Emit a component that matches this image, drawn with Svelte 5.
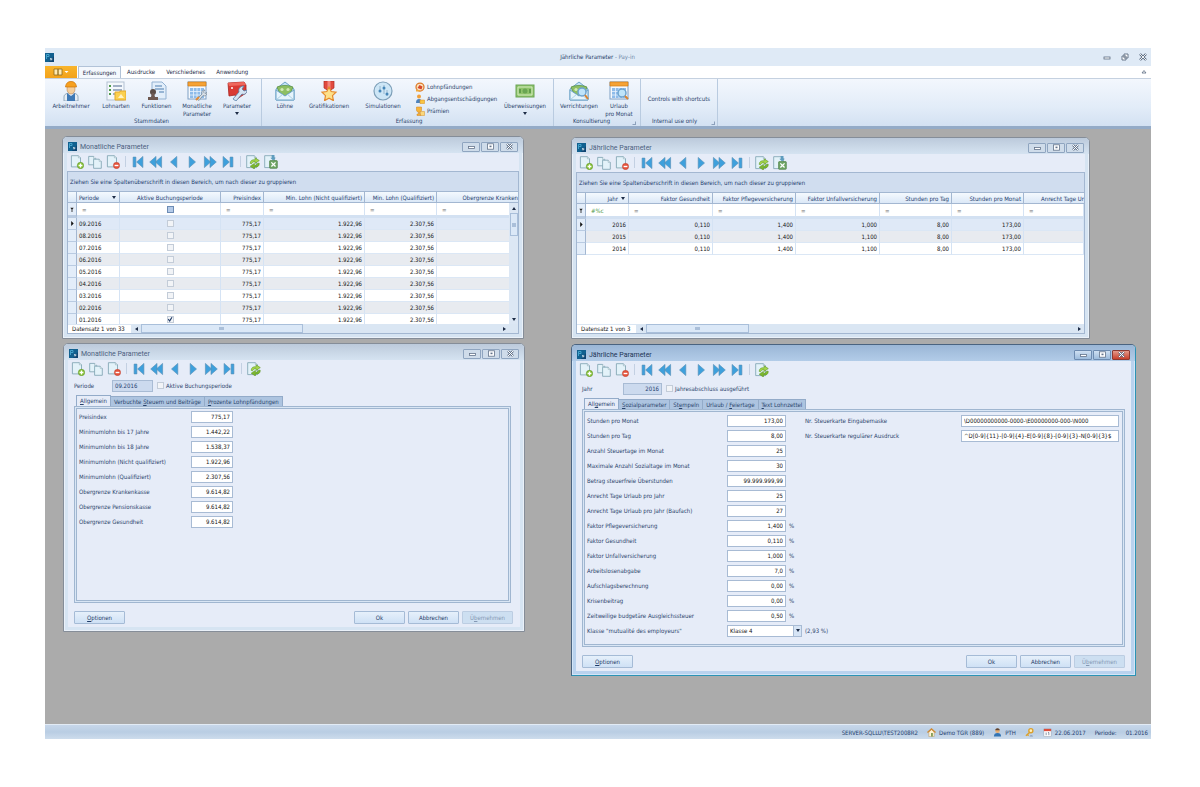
<script>
    const ribbonTabs = ['Ausdrucke', 'Verschiedenes', 'Anwendung'];

    const masterItems = [
        { icon: 'worker', label: 'Arbeitnehmer', width: 50 },
        { icon: 'wages', label: 'Lohnarten', width: 40 },
        { icon: 'stamp', label: 'Funktionen', width: 41 },
        { icon: 'calendar', label: 'Monatliche\nParameter', width: 40 },
        { icon: 'toolbox', label: 'Parameter', width: 40, menu: true },
    ];

    const entryItems = [
        { icon: 'envelope', label: 'Löhne', width: 34 },
        { icon: 'medal', label: 'Gratifikationen', width: 54 },
        { icon: 'simulation', label: 'Simulationen', width: 54 },
    ];

    const smallItems = [
        { icon: 'seizure', label: 'Lohnpfändungen' },
        { icon: 'leave', label: 'Abgangsentschädigungen' },
        { icon: 'bonus', label: 'Prämien' },
    ];

    const consultItems = [
        { icon: 'mailsearch', label: 'Verrichtungen', width: 46 },
        { icon: 'calsearch', label: 'Urlaub\npro Monat', width: 34 },
    ];

    const months = ['09', '08', '07', '06', '05', '04', '03', '02', '01'];

    const monthGrid = {
        columns: [
            { label: 'Periode', width: 43, sorted: true },
            { label: 'Aktive Buchungsperiode', width: 101, check: true },
            { label: 'Preisindex', width: 43, right: true },
            { label: 'Min. Lohn (Nicht qualifiziert)', width: 101, right: true },
            { label: 'Min. Lohn (Qualifiziert)', width: 72, right: true },
            { label: 'Obergrenze Kranken', cut: true },
        ],
        rows: months.map((m) => [m + '.2016', m === '01', '775,17', '1.922,96', '2.307,56', '']),
        status: 'Datensatz 1 von 33',
        thumb: 162,
        vertical: true,
    };

    const yearGrid = {
        columns: [
            { label: 'Jahr', width: 43, right: true, sorted: true, mask: true },
            { label: 'Faktor Gesundheit', width: 84, right: true },
            { label: 'Faktor Pflegeversicherung', width: 83, right: true },
            { label: 'Faktor Unfallversicherung', width: 84, right: true },
            { label: 'Stunden pro Tag', width: 72, right: true },
            { label: 'Stunden pro Monat', width: 72, right: true },
            { label: 'Anrecht Tage Ur', cut: true },
        ],
        rows: [
            ['2016', '0,110', '1,400', '1,000', '8,00', '173,00', ''],
            ['2015', '0,110', '1,400', '1,100', '8,00', '173,00', ''],
            ['2014', '0,110', '1,400', '1,100', '8,00', '173,00', ''],
        ],
        status: 'Datensatz 1 von 3',
        thumb: 103,
        vertical: false,
    };

    const monthForm = {
        id: 'month',
        key: { label: 'Periode', value: '09.2016' },
        check: 'Aktive Buchungsperiode',
        tabs: [['', 'A', 'llgemein'], ['Verbuchte ', 'S', 'teuern und Beiträge'], ['', 'P', 'rozente Lohnpfändungen']],
        fields: [
            { label: 'Preisindex', value: '775,17' },
            { label: 'Minimumlohn bis 17 Jahre', value: '1.442,22' },
            { label: 'Minimumlohn bis 18 Jahre', value: '1.538,37' },
            { label: 'Minimumlohn (Nicht qualifiziert)', value: '1.922,96' },
            { label: 'Minimumlohn (Qualifiziert)', value: '2.307,56' },
            { label: 'Obergrenze Krankenkasse', value: '9.614,82' },
            { label: 'Obergrenze Pensionskasse', value: '9.614,82' },
            { label: 'Obergrenze Gesundheit', value: '9.614,82' },
        ],
        extra: [],
    };

    const yearForm = {
        id: 'year',
        key: { label: 'Jahr', value: '2016' },
        check: 'Jahresabschluss ausgeführt',
        tabs: [['All', 'g', 'emein'], ['', 'S', 'ozialparameter'], ['St', 'e', 'mpeln'], ['Urlaub / ', 'F', 'eiertage'], ['', 'T', 'ext Lohnzettel']],
        fields: [
            { label: 'Stunden pro Monat', value: '173,00' },
            { label: 'Stunden pro Tag', value: '8,00' },
            { label: 'Anzahl Steuertage im Monat', value: '25' },
            { label: 'Maximale Anzahl Sozialtage im Monat', value: '30' },
            { label: 'Betrag steuerfreie Überstunden', value: '99.999.999,99' },
            { label: 'Anrecht Tage Urlaub pro Jahr', value: '25' },
            { label: 'Anrecht Tage Urlaub pro Jahr (Baufach)', value: '27' },
            { label: 'Faktor Pflegeversicherung', value: '1,400', unit: '%' },
            { label: 'Faktor Gesundheit', value: '0,110', unit: '%' },
            { label: 'Faktor Unfallversicherung', value: '1,000', unit: '%' },
            { label: 'Arbeitslosenabgabe', value: '7,0', unit: '%' },
            { label: 'Aufschlagsberechnung', value: '0,00', unit: '%' },
            { label: 'Krisenbeitrag', value: '0,00', unit: '%' },
            { label: 'Zeitweilige budgetäre Ausgleichssteuer', value: '0,50', unit: '%' },
            { label: 'Klasse "mutualité des employeurs"', value: 'Klasse 4', unit: '(2,93 %)', select: true },
        ],
        extra: [
            { label: 'Nr. Steuerkarte Eingabemaske', value: '\\D00000000000-0000-\\E00000000-000-\\N000' },
            { label: 'Nr. Steuerkarte regulärer Ausdruck', value: '^D[0-9]{11}-[0-9]{4}-E[0-9]{8}-[0-9]{3}-N[0-9]{3}$' },
        ],
    };

    // Position of the child windows inside the workspace
    const windows = [
        { title: 'Monatliche Parameter', x: 17, y: 7, w: 462, h: 203, grid: monthGrid },
        { title: 'Jährliche Parameter', x: 526, y: 8, w: 519, h: 202, grid: yearGrid },
        { title: 'Monatliche Parameter', x: 18, y: 214, w: 462, h: 289, form: monthForm },
        { title: 'Jährliche Parameter', x: 526, y: 215, w: 565, h: 332, form: yearForm, active: true },
    ];

    const recordTools = [
        { icon: 'new', label: 'Neu' },
        { icon: 'copy', label: 'Kopieren' },
        { icon: 'delete', label: 'Löschen' },
    ];
    const navTools = [
        { icon: 'first', label: 'Erster' },
        { icon: 'fastback', label: 'Seite zurück' },
        { icon: 'back', label: 'Zurück' },
        { icon: 'next', label: 'Weiter' },
        { icon: 'fastnext', label: 'Seite weiter' },
        { icon: 'last', label: 'Letzter' },
    ];
</script>

{#snippet logo()}
    <svg class="logo" viewBox="0 0 9 9" aria-hidden="true">
        <rect width="9" height="9" fill="#0f4673" />
        <path d="M0 0h9v3L4 9H0z" fill="#11608f" />
        <path d="M1.500 6V1.500h2.500v2H2" fill="none" stroke="#4fb3d9" stroke-width=".8" />
        <path d="M5 5l3 1-1.500.500L6 8z" fill="#fff" />
    </svg>
{/snippet}

{#snippet sheet(x, y, w, h)}
    <path d="M{x} {y}h{w - 3}l3 3v{h - 3}h-{w}z" fill="#e3f2f9" stroke="#7fa3b2" stroke-width="1.200" />
    <path d="M{x + w - 3} {y}v3h3" fill="#fff" stroke="#7fa3b2" stroke-width=".8" />
{/snippet}

{#snippet icon(name)}
    <svg class="icon" viewBox="0 0 20 20" aria-hidden="true">
        {#if name === 'new'}
            {@render sheet(2, 1, 13, 16)}
            <circle cx="15" cy="15" r="4.500" fill="#8cc63a" stroke="#568c1c" stroke-width=".8" />
            <path d="M15 12.300v5.400M12.300 15h5.400" stroke="#fff" stroke-width="1.800" />
        {:else if name === 'copy'}
            {@render sheet(1, 2, 10, 12)}
            {@render sheet(8, 6, 11, 13)}
        {:else if name === 'delete'}
            {@render sheet(2, 1, 13, 16)}
            <circle cx="15" cy="15" r="4.500" fill="#e5533c" stroke="#b53a29" stroke-width=".6" />
            <path d="M12.300 15h5.400" stroke="#fff" stroke-width="2" />
        {:else if name === 'first'}
            <path d="M3 3h4v14H3zM17 2v16L8 10z" fill="#3ea0dc" stroke="#5a8fb5" stroke-width=".9" />
        {:else if name === 'last'}
            <path d="M13 3h4v14h-4zM3 2v16l9-8z" fill="#3ea0dc" stroke="#5a8fb5" stroke-width=".9" />
        {:else if name === 'fastback'}
            <path d="M10 2v16L1 10zM18 2v16L9 10z" fill="#3ea0dc" stroke="#5a8fb5" stroke-width=".9" />
        {:else if name === 'fastnext'}
            <path d="M2 2v16l9-8zM10 2v16l9-8z" fill="#3ea0dc" stroke="#5a8fb5" stroke-width=".9" />
        {:else if name === 'back'}
            <path d="M14 2v16l-9-8z" fill="#3ea0dc" stroke="#5a8fb5" stroke-width=".9" />
        {:else if name === 'next'}
            <path d="M6 2v16l9-8z" fill="#3ea0dc" stroke="#5a8fb5" stroke-width=".9" />
        {:else if name === 'refresh'}
            {@render sheet(1, 1, 14, 17)}
            <path d="M6 12c0-4 3-6 7-5V4l6 4-6 4V9.500c-3 0-4 1-5 3z" fill="#a5d64a" stroke="#5c9420" stroke-width=".8" />
            <path d="M19 12c0 4-3 6-7 5v3l-6-4 6-4v2.500c3 0 4-1 5-3z" fill="#7cb82f" stroke="#5c9420" stroke-width=".8" />
        {:else if name === 'excel'}
            {@render sheet(1, 1, 14, 17)}
            <path d="M11 0h4v4h2l-4 4-4-4h2z" fill="#5f9dbf" />
            <rect x="8" y="8" width="11" height="11" rx="1" fill="#6fa665" stroke="#4c8045" />
            <path d="M10.500 10.500l6 6M16.500 10.500l-6 6" stroke="#fff" stroke-width="1.800" />
        {:else if name === 'worker'}
            <path d="M3 20v-4c0-3 3-4 7-4s7 1 7 4v4z" fill="#e8eef4" stroke="#7d97ad" stroke-width=".8" />
            <path d="M6 20v-8l4 3 4-3v8z" fill="#3f79b5" />
            <ellipse cx="10" cy="8" rx="4" ry="5" fill="#f6cf9c" stroke="#bf8650" stroke-width=".6" />
            <path d="M4.500 6C5 2 7 .500 10 .500S15 2 15.500 6z" fill="#f7a01f" stroke="#c97308" stroke-width=".7" />
        {:else if name === 'wages'}
            <rect x="1" y="1" width="17" height="18" fill="#f4f8fc" stroke="#b3c1d2" />
            <path d="M3 5h2M3 9h2M3 13h2" stroke="#4f9a4a" stroke-width="2" />
            <path d="M7 5h9M7 9h9M7 13h3" stroke="#8496b3" stroke-width="1.300" />
            <path d="M9 11h5v-1h6v9H9z" fill="#fbd04f" stroke="#e3a82c" />
            <path d="M12 17l3-4 3 4z" fill="#fff3c4" />
        {:else if name === 'stamp'}
            <path d="M5 1h10l4 4v13H5z" fill="#e2eefa" stroke="#93b2d2" />
            <path d="M8 5h7M8 8h9M12 11h5" stroke="#7fa2c8" stroke-width="1.300" />
            <circle cx="6" cy="11" r="3" fill="#5b4c46" />
            <path d="M5 12h2l1 4h3v3H1v-3h3z" fill="#6d5850" />
        {:else if name === 'calendar' || name === 'calsearch'}
            <rect x="1" y="1" width="18" height="17" fill="#f5f9fd" stroke="#7e9fc4" />
            <path d="M1 1h18v4H1z" fill="#f5a235" stroke="#d67f16" stroke-width=".7" />
            <path d="M3 7h14v10H3z" fill="#8fbcea" />
            <path d="M3 10.500h14M3 14h14M6.500 7v10M10 7v10M13.500 7v10" stroke="#e9f3fc" stroke-width=".8" />
            {#if name === 'calendar'}
                <path d="M10 18l5-5c-1-3 1-4 3-4l-1.500 2 1.500 1.500 2-1c0 3-2 4-4 3l-4 5z" fill="#d9e0e7" stroke="#6f8192" stroke-width=".7" />
                <path d="M9 19l3-3" stroke="#e08a35" stroke-width="2" />
            {:else}
                <circle cx="13" cy="12" r="4" fill="#bfe4fa" stroke="#6da3cf" stroke-width="1.500" />
                <path d="M16 15l3 3" stroke="#d98331" stroke-width="2" />
            {/if}
        {:else if name === 'toolbox'}
            <path d="M1 2l16-1 2 3v8l-9 6-2-4-6 1z" fill="#d93a33" stroke="#a82520" stroke-width=".8" />
            <path d="M1 2l16-1 2 3-17 1z" fill="#ef675c" />
            <circle cx="5" cy="7" r="1" fill="#fff" />
            <path d="M6 18l6-7c-1-4 2-6 5-6l-2 3 2 2 3-1c0 4-3 5-5 4l-6 7z" fill="#d5e4f2" stroke="#5580a8" stroke-width=".8" />
        {:else if name === 'envelope' || name === 'mailsearch'}
            <path d="M1 8l9-7 9 7v11H1z" fill="#c1e0f5" stroke="#6ea4c8" />
            <path d="M2 6c5-2 11-2 16 0l-2 5-6 4-6-4z" fill="#8ebf63" stroke="#538c3e" stroke-width=".7" />
            <circle cx="7" cy="8.500" r="1.600" fill="#d2e9b5" />
            <circle cx="13" cy="8.500" r="1.600" fill="#d2e9b5" />
            <path d="M1 9l9 6 9-6v10H1z" fill="#e6f4fc" stroke="#6ea4c8" />
            <path d="M1 19l7-6M19 19l-7-6" stroke="#9cc5de" stroke-width=".8" />
            {#if name === 'mailsearch'}
                <circle cx="13" cy="11" r="4" fill="#bfe4fa" stroke="#6da3cf" stroke-width="1.500" />
                <path d="M16 14l3 4" stroke="#d98331" stroke-width="2" />
            {/if}
        {:else if name === 'medal'}
            <path d="M5 0h10v7l-5 3-5-3z" fill="#e14a3e" stroke="#ae2c25" stroke-width=".7" />
            <path d="M8.500 0h3v8h-3z" fill="#f4867c" />
            <path d="M10 6l2.200 4.500 4.800.7-3.500 3.400.9 5L10 17.200l-4.400 2.400.9-5L3 11.200l4.800-.7z" fill="#fde08a" stroke="#e58a2c" stroke-width="1.200" />
        {:else if name === 'simulation'}
            <circle cx="10" cy="10" r="9" fill="#cde6f6" stroke="#7d9fb8" stroke-width="1.200" />
            <path d="M7 5v5M11 4v9M14 9v6" stroke="#89aac4" stroke-width=".8" />
            <circle cx="7" cy="10" r="1.500" fill="#4586b8" />
            <circle cx="11" cy="7" r="1.500" fill="#4586b8" />
            <circle cx="14" cy="13" r="1.500" fill="#4586b8" />
        {:else if name === 'seizure'}
            <circle cx="10" cy="10" r="8" fill="#fbe3bd" stroke="#dd7b2a" stroke-width="2.500" />
            <path d="M5 12l4-6 6 3-2 6z" fill="#d6472d" />
            <path d="M2 16h8v3H2z" fill="#f2a93b" />
        {:else if name === 'leave'}
            <circle cx="8" cy="5" r="4" fill="#f1a03a" />
            <path d="M2 18c0-6 2-8 6-8s6 2 6 8z" fill="#4c82bd" />
            <path d="M10 12h9v7h-9z" fill="#f9c543" stroke="#d88c1c" />
        {:else if name === 'bonus'}
            <path d="M3 2h10v6c0 3-2 4-4 4v4h3v3H4v-3h3v-4c-2 0-4-1-4-4z" fill="#f7b53a" stroke="#d08119" />
            <path d="M11 11h8v8h-8z" fill="#fad77c" stroke="#d7912a" />
        {:else if name === 'money'}
            <rect x="1" y="4" width="18" height="12" fill="#8fc36b" stroke="#6aa455" />
            <path d="M3 6h14v8H3z" fill="none" stroke="#d5ecc0" />
            <circle cx="10" cy="10" r="2.500" fill="#6aa653" />
            <path d="M5 8v4M15 8v4" stroke="#4a8a39" stroke-width="1.300" />
        {:else if name === 'house'}
            <path d="M4 9v10h12V9l-6-6z" fill="#fff3d3" stroke="#b08b52" />
            <path d="M1 10l9-8 9 8" fill="none" stroke="#cf8b37" stroke-width="3" />
            <path d="M9 11h4v8H9z" fill="#7f9b52" />
        {:else if name === 'user'}
            <circle cx="10" cy="6" r="5" fill="#e6ad71" />
            <path d="M5 5c0-6 10-6 10 0z" fill="#5d4333" />
            <path d="M2 19c0-6 3-8 8-8s8 2 8 8z" fill="#3374b3" />
        {:else if name === 'key'}
            <circle cx="13" cy="6" r="4.500" fill="#fff0bd" stroke="#dba02d" stroke-width="3" />
            <path d="M10 10l-8 7M5 14l3 3" stroke="#dba02d" stroke-width="3" />
            <path d="M10 19c1-4 7-4 8 0z" fill="#8a9db8" />
        {:else if name === 'date'}
            <rect x="2" y="2" width="16" height="17" fill="#fff" stroke="#8d98a8" />
            <path d="M2 2h16v5H2z" fill="#dc4e3c" />
            <path d="M7 10v6M11 10h2v6" fill="none" stroke="#51617a" stroke-width="1.500" />
        {/if}
    </svg>
{/snippet}

{#snippet bigButton(item)}
    <button class="big" style="width: {item.width}px">
        {@render icon(item.icon)}
        <span>{item.label}</span>
        {#if item.menu}<i class="down"></i>{/if}
    </button>
{/snippet}

{#snippet controls()}
    <div class="controls">
        <button aria-label="Minimieren"><svg viewBox="0 0 9 7"><rect x="1.500" y="3.500" width="6" height="2" fill="#fff" stroke="#63738a" stroke-width=".8" /></svg></button>
        <button aria-label="Maximieren"><svg viewBox="0 0 9 7"><rect x="1.500" y=".8" width="6" height="5.400" fill="#fff" stroke="#63738a" stroke-width=".8" /><rect x="3.500" y="2.600" width="2" height="1.600" fill="#63738a" /></svg></button>
        <button class="close" aria-label="Schließen"><svg viewBox="0 0 9 7"><path d="M2 1l5 5M7 1L2 6" stroke="#63738a" stroke-width="2.400" /><path d="M2 1l5 5M7 1L2 6" stroke="#fff" stroke-width="1" /></svg></button>
    </div>
{/snippet}

{#snippet toolButtons(list)}
    {#each list as tool}
        <button class="tool" aria-label={tool.label}>{@render icon(tool.icon)}</button>
    {/each}
{/snippet}

{#snippet dataGrid(grid)}
    <div class="grid">
        <div class="group-panel">Ziehen Sie eine Spaltenüberschrift in diesen Bereich, um nach dieser zu gruppieren</div>
        <div class="grid-view">
            <table>
                <colgroup>
                    <col style="width: 9px" />
                    {#each grid.columns as col}
                        <col style={col.width ? `width: ${col.width}px` : ''} />
                    {/each}
                </colgroup>
                <thead>
                    <tr>
                        <th></th>
                        {#each grid.columns as col}
                            <th class:right={col.right} class:center={col.check} class:cut={col.cut} class:sorted={col.sorted}>
                                {col.label}{#if col.sorted}<i class="down"></i>{/if}
                            </th>
                        {/each}
                    </tr>
                    <tr class="filter">
                        <td class="mark"><svg viewBox="0 0 6 6"><path d="M1 1h4L3.500 3v3h-1V3z" fill="#222" /></svg></td>
                        {#each grid.columns as col}
                            <td class:center={col.check}>
                                {#if col.check}
                                    <input type="checkbox" class="mixed" aria-label="Filter {col.label}" />
                                {:else if col.mask}
                                    <span class="mask">#%c</span>
                                {:else}
                                    <span class="eq">=</span>
                                {/if}
                            </td>
                        {/each}
                    </tr>
                </thead>
                <tbody>
                    {#each grid.rows as row, index}
                        <tr class:selected={index === 0}>
                            <td class="mark">{#if index === 0}<svg viewBox="0 0 6 6"><path d="M2 0l3 3-3 3z" fill="#111" /></svg>{/if}</td>
                            {#each row as cell, c}
                                <td class:right={grid.columns[c].right} class:center={grid.columns[c].check}>
                                    {#if grid.columns[c].check}
                                        <input type="checkbox" checked={cell} aria-label={row[0]} />
                                    {:else}
                                        {cell}
                                    {/if}
                                </td>
                            {/each}
                        </tr>
                    {/each}
                </tbody>
            </table>
            {#if grid.vertical}
                <div class="vscroll"><i class="up"></i><b></b><i class="down"></i></div>
            {/if}
        </div>
        <div class="hscroll" class:corner={grid.vertical}>
            <span>{grid.status}</span>
            <i class="left"></i>
            <b style="width: {grid.thumb}px"></b>
            <i class="rightward"></i>
        </div>
    </div>
{/snippet}

{#snippet dataForm(form)}
    <form class="form {form.id}" onsubmit={(e) => e.preventDefault()}>
        <div class="key-row">
            <label for="{form.id}-key">{form.key.label}</label>
            <input id="{form.id}-key" class="key" type="text" value={form.key.value} readonly />
            <label class="check"><input type="checkbox" />{form.check}</label>
        </div>
        <div class="tabs" role="tablist">
            {#each form.tabs as tab, index}
                <button type="button" role="tab" class="tab" class:current={index === 0} aria-selected={index === 0}>{tab[0]}<u>{tab[1]}</u>{tab[2]}</button>
            {/each}
        </div>
        <div class="sheet">
            <div class="sheet-inner">
                <div class="fields">
                    {#each form.fields as field, index}
                        <div class="field">
                            <label for="{form.id}-{index}">{field.label}</label>
                            {#if field.select}
                                <div class="select">
                                    <select id="{form.id}-{index}"><option>{field.value}</option></select>
                                    <span><i class="down"></i></span>
                                </div>
                            {:else}
                                <input id="{form.id}-{index}" type="text" value={field.value} />
                            {/if}
                            {#if field.unit}<span class="unit">{field.unit}</span>{/if}
                        </div>
                    {/each}
                </div>
                <div class="fields extra">
                    {#each form.extra as field, index}
                        <div class="field">
                            <label for="{form.id}-extra-{index}">{field.label}</label>
                            <input id="{form.id}-extra-{index}" type="text" value={field.value} />
                        </div>
                    {/each}
                </div>
            </div>
        </div>
        <div class="actions">
            <button type="button" class="options"><u>O</u>ptionen</button>
            <button type="submit">Ok</button>
            <button type="button">Abbrechen</button>
            <button type="button" disabled>Ü<u>b</u>ernehmen</button>
        </div>
    </form>
{/snippet}

<div class="page">
    <div class="app">
        <header class="titlebar">
            {@render logo()}
            <h1>Jährliche Parameter <span>- Pay-in</span></h1>
            <div class="app-controls">
                <button aria-label="Minimieren"><svg viewBox="0 0 8 8"><rect x="1" y="4" width="6" height="2" fill="#fff" stroke="#5b6b80" stroke-width=".8" /></svg></button>
                <button aria-label="Wiederherstellen"><svg viewBox="0 0 8 8"><path d="M3 1h4v4H3zM1 3h4v4H1z" fill="#fff" stroke="#5b6b80" stroke-width=".9" /></svg></button>
                <button aria-label="Schließen"><svg viewBox="0 0 8 8"><path d="M1 1l6 6M7 1L1 7" stroke="#5b6b80" stroke-width="2.400" /><path d="M1 1l6 6M7 1L1 7" stroke="#fff" stroke-width=".9" /></svg></button>
            </div>
        </header>

        <nav class="ribbon-tabs">
            <button class="file" aria-label="Datei">
                <svg viewBox="0 0 16 8"><path d="M1 1h4v6H1zM5 1h4v6H5z" fill="#ffe9b0" stroke="#8d6a1d" stroke-width=".8" /><path d="M11.500 3h4l-2 2z" fill="#fff" /></svg>
            </button>
            <button class="current">Erfassungen</button>
            {#each ribbonTabs as tab}
                <button>{tab}</button>
            {/each}
            <svg class="collapse" viewBox="0 0 6 6"><path d="M1 4l2-2.500L5 4z" fill="#fff" stroke="#5b6b80" stroke-width=".8" /></svg>
        </nav>

        <div class="ribbon">
            <section class="master">
                <div class="items">
                    {#each masterItems as item}{@render bigButton(item)}{/each}
                </div>
                <h2>Stammdaten</h2>
            </section>
            <section class="entry">
                <div class="items">
                    {#each entryItems as item}{@render bigButton(item)}{/each}
                    <div class="small-items">
                        {#each smallItems as item}
                            <button>{@render icon(item.icon)}{item.label}</button>
                        {/each}
                    </div>
                    {@render bigButton({ icon: 'money', label: 'Überweisungen', width: 50, menu: true })}
                </div>
                <h2>Erfassung</h2>
            </section>
            <section class="consult">
                <div class="items">
                    {#each consultItems as item}{@render bigButton(item)}{/each}
                </div>
                <h2 class="launch">Konsultierung<i class="launcher"></i></h2>
            </section>
            <section class="internal">
                <div class="items middle"><button>Controls with shortcuts</button></div>
                <h2 class="launch">Internal use only<i class="launcher"></i></h2>
            </section>
        </div>

        <main class="workspace">
            {#each windows as win}
                <article class="window" class:active={win.active} style="left: {win.x}px; top: {win.y}px; width: {win.w}px; height: {win.h}px">
                    <header>
                        {@render logo()}
                        <h3>{win.title}</h3>
                        {@render controls()}
                    </header>
                    <div class="body">
                        <div class="toolbar">
                            {@render toolButtons(recordTools)}
                            <span class="divider"></span>
                            {@render toolButtons(navTools)}
                            <span class="divider"></span>
                            <button class="tool" aria-label="Aktualisieren">{@render icon('refresh')}</button>
                            {#if win.grid}
                                <button class="tool" aria-label="Excel">{@render icon('excel')}</button>
                            {/if}
                        </div>
                        {#if win.grid}
                            {@render dataGrid(win.grid)}
                        {:else}
                            {@render dataForm(win.form)}
                        {/if}
                    </div>
                </article>
            {/each}
        </main>

        <footer class="statusbar">
            <span>SERVER-SQLLU\TEST2008R2</span>
            <span>{@render icon('house')}Demo TGR (889)</span>
            <span>{@render icon('user')}PTH</span>
            <span>{@render icon('key')}</span>
            <span>{@render icon('date')}22.06.2017</span>
            <span>Periode:</span>
            <span>01.2016</span>
        </footer>
    </div>
</div>

<style>
:global(body) {
    background: #fff;
}

.page,
.page * {
    box-sizing: border-box;
}

.page {
    display: flex;
    min-height: 100vh;
    padding: 48px 49px 48px 45px;
    font-family: 'DejaVu Sans Condensed', 'Liberation Sans', sans-serif;
    font-size: 6px;
    line-height: 8px;
    color: #2b446c;
}

.app {
    flex: 1;
    min-width: 0;
    display: flex;
    flex-direction: column;
}

button,
input,
select {
    font: inherit;
    color: inherit;
    margin: 0;
    padding: 0;
    border: 0;
    border-radius: 0;
    background: none;
}

h1,
h2,
h3 {
    margin: 0;
    font-size: 6px;
    font-weight: normal;
}

svg {
    display: block;
}

.logo {
    width: 9px;
    height: 9px;
    flex: none;
}

.icon {
    width: 10px;
    height: 10px;
    flex: none;
}

i {
    display: inline-block;
    width: 0;
    height: 0;
    border: 2px solid transparent;
}
i.down {
    border-top: 3px solid #1d2c46;
    border-bottom: 0;
}
i.up {
    border-bottom: 3px solid #1d2c46;
    border-top: 0;
}
i.left {
    border-right: 3px solid #1d2c46;
    border-left: 0;
}
i.rightward {
    border-left: 3px solid #1d2c46;
    border-right: 0;
}

/* Main title bar */
.titlebar {
    display: flex;
    align-items: center;
    height: 18px;
    background: #dfeaf6;
}
.titlebar h1 {
    flex: 1;
    padding-left: 38px;
    text-align: center;
    color: #1e3a66;
}
.titlebar h1 span {
    color: #7188a8;
}
.app-controls {
    display: flex;
    gap: 10px;
    padding-right: 4px;
}
.app-controls svg {
    width: 8px;
    height: 8px;
}

/* Ribbon */
.ribbon-tabs {
    display: flex;
    align-items: stretch;
    gap: 1px;
    height: 12px;
}
.ribbon-tabs button {
    padding: 0 5px;
    color: #1c2c48;
}
.ribbon-tabs .file {
    width: 32px;
    background: linear-gradient(#f9b52c, #f3a21b);
}
.file svg {
    width: 16px;
    height: 8px;
    margin-left: 3px;
}
.ribbon-tabs .current {
    width: 43px;
    padding: 0;
    border: 1px solid #b2c3d8;
    border-bottom: 0;
    background: #f4f8fd;
}
.collapse {
    width: 6px;
    height: 6px;
    margin: 3px 4px 0 auto;
}
.ribbon {
    display: flex;
    height: 51px;
    border-top: 1px solid #c5d1e0;
    border-bottom: 3px solid #94abc7;
    background: linear-gradient(#f3f7fd, #e2ecf8 60%, #d3e1f2);
}
.ribbon section {
    display: flex;
    flex-direction: column;
    border-right: 1px solid #b9cbe0;
    padding: 2px 2px 0;
}
.ribbon .master {
    padding: 2px 4px 0 1px;
}
.ribbon .entry {
    padding: 2px 3px 0 6px;
}
.ribbon .consult {
    padding-right: 4px;
}
.ribbon .internal {
    width: 77px;
}
.ribbon h2 {
    position: relative;
    height: 9px;
    text-align: center;
}
.ribbon .launch {
    padding-right: 9px;
}
.launcher {
    position: absolute;
    right: 0;
    bottom: 1px;
    width: 4px;
    height: 4px;
    border: 1px solid #8ba0bb;
    border-left-color: transparent;
    border-top-color: transparent;
}
.items {
    flex: 1;
    min-height: 0;
    display: flex;
    align-items: flex-start;
}
.items.middle {
    align-items: center;
    justify-content: center;
}
.big {
    display: flex;
    flex-direction: column;
    align-items: center;
    white-space: pre;
}
.big .icon {
    width: 20px;
    height: 20px;
    margin-bottom: 1px;
}
.big i {
    margin-top: 2px;
}
.small-items {
    display: flex;
    flex-direction: column;
    width: 90px;
    padding-left: 5px;
}
.small-items button {
    display: flex;
    align-items: center;
    gap: 2px;
    height: 12px;
}

/* Workspace and child windows */
.workspace {
    position: relative;
    flex: 1;
    min-height: 560px;
    background: #ababab;
    overflow: hidden;
}
.window {
    position: absolute;
    display: flex;
    flex-direction: column;
    padding: 0 4px 4px;
    border: 1px solid #858d98;
    border-radius: 5px 5px 0 0;
    background: #d6e4f2;
    box-shadow: inset 0 0 0 1px #eaf1f9;
}
.window.active {
    border-color: #4a6380;
    border-right-color: #2b93b5;
    border-bottom-color: #2b93b5;
    background: #b9d2ee;
    box-shadow: inset 0 0 0 1px #d3e5f7;
}
.window header {
    flex: none;
    display: flex;
    align-items: center;
    gap: 3px;
    height: 16px;
    margin: 0 -4px;
    padding: 3px 5px 0;
    border-radius: 4px 4px 0 0;
    background: linear-gradient(#bccadb, #d5e3f1);
}
.window.active header {
    background: linear-gradient(#9ab6d6, #b2cce8);
}
.window h3 {
    font-family: Roboto, sans-serif;
    font-size: 7px;
    color: #4b5f7e;
}
.window.active h3 {
    color: #1d3355;
}
.controls {
    display: flex;
    gap: 1px;
    margin-left: auto;
}
.controls button {
    display: flex;
    align-items: center;
    justify-content: center;
    width: 18px;
    height: 10px;
    border: 1px solid #8fa5c0;
    border-radius: 1px;
    background: #cfdcea;
}
.controls svg {
    width: 9px;
    height: 7px;
}
.active .controls button {
    background: linear-gradient(#cfe0f2, #9cbbdc);
    border-color: #6d8bb0;
}
.active .controls .close {
    background: linear-gradient(#e59a8b, #c9402b);
    border-color: #8d3a32;
}
.body {
    flex: 1;
    min-height: 0;
    display: flex;
    flex-direction: column;
    background: #e6ecf8;
}
.toolbar {
    flex: none;
    display: flex;
    align-items: center;
    height: 17px;
    padding-left: 1px;
}
.tool {
    display: flex;
    justify-content: center;
    width: 18px;
}
.tool .icon {
    width: 14px;
    height: 14px;
}
.divider {
    width: 1px;
    height: 11px;
    margin: 0 3px;
    background: #c3d0e2;
}

/* Grid windows */
.grid {
    flex: 1;
    min-height: 0;
    display: flex;
    flex-direction: column;
    margin-top: 1px;
    border: 1px solid #a3b7d1;
    background: #fff;
}
.group-panel {
    flex: none;
    height: 19px;
    padding: 6px 2px 0;
    background: #d0ddef;
    color: #24406e;
}
.grid-view {
    position: relative;
    flex: 1;
    min-height: 0;
    overflow: hidden;
}
table {
    width: 100%;
    table-layout: fixed;
    border-collapse: separate;
    border-spacing: 0;
    color: #151515;
}
th,
td {
    height: 12px;
    padding: 0 2px;
    border-right: 1px solid #d5e3f4;
    border-bottom: 1px solid #dbe7f5;
    line-height: 9px;
    font-weight: normal;
    text-align: left;
    white-space: nowrap;
}
th {
    background: linear-gradient(#f4f9fe, #dbe8f7);
    border-top: 1px solid #a3b7d1;
    border-right-color: #a3b7d1;
    border-bottom-color: #a3b7d1;
    color: #24406e;
}
th.sorted {
    position: relative;
}
th.sorted i {
    position: absolute;
    right: 3px;
    top: 4px;
}
th.sorted.right {
    padding-right: 10px;
}
th.cut {
    padding: 0;
    border-right: 0;
    text-align: right;
}
.right {
    text-align: right;
}
.center {
    text-align: center;
}
.filter td {
    height: 15px;
    border-bottom: 3px solid #d3e1f2;
    padding-left: 5px;
}
.filter td.center {
    padding-left: 2px;
}
.eq {
    font-weight: bold;
    color: #9a9a9a;
}
.mask {
    color: #4f9a4a;
}
tbody tr:nth-child(even) {
    background: #e8ebf0;
}
tbody tr.selected {
    background: #dfe9f7;
}
td.mark,
.filter td.mark {
    padding: 0 1px;
    background: #e3edf9;
    border-right-color: #a3b7d1;
    border-bottom-color: #b9cbe2;
}
.mark svg {
    width: 6px;
    height: 5px;
}
input[type='checkbox'] {
    appearance: none;
    display: block;
    flex: none;
    width: 7px;
    height: 7px;
    border: 1px solid #c3ccd8;
    background: #f2f4f7;
}
td input[type='checkbox'] {
    margin: 0 auto;
}
input[type='checkbox'].mixed {
    border-color: #6d8cb5;
    background: #b5cbe8;
}
input[type='checkbox']:checked::after {
    content: '';
    display: block;
    width: 5px;
    height: 5px;
    background: #26406b;
    clip-path: polygon(0 45%, 20% 35%, 40% 60%, 80% 0, 100% 10%, 45% 100%);
}
.vscroll {
    position: absolute;
    top: 12px;
    right: 0;
    bottom: 0;
    width: 9px;
    display: flex;
    flex-direction: column;
    align-items: center;
    padding: 4px 0 3px;
    background: #dce7f4;
}
.vscroll b {
    width: 8px;
    height: 23px;
    margin-top: 3px;
    border: 1px solid #a9bfda;
    background: #dbe8f7 linear-gradient(#aabfd9, #aabfd9) center / 4px 4px no-repeat;
}
.vscroll .down {
    margin-top: auto;
}
.hscroll {
    flex: none;
    display: flex;
    align-items: center;
    height: 9px;
    padding-right: 3px;
    background: #dae6f3;
}
.hscroll.corner {
    padding-right: 12px;
}
.hscroll span {
    padding: 0 6px 0 4px;
    background: #fff;
    color: #151515;
}
.hscroll i {
    margin: 0 3px 0 4px;
}
.hscroll b {
    height: 9px;
    border: 1px solid #a9bfda;
    background: #dbe8f7 linear-gradient(#aabfd9, #aabfd9) center / 5px 3px no-repeat;
}
.hscroll .rightward {
    margin: 0 0 0 auto;
}

/* Form windows */
.form {
    flex: 1;
    display: flex;
    flex-direction: column;
    padding: 2px 9px 3px 6px;
}
.form.year {
    padding: 4px 6px 3px;
}
input[type='text'],
select {
    height: 12px;
    padding: 0 2px;
    border: 1px solid #a8bbd4;
    background: #fff;
    color: #111;
}
.key-row {
    display: flex;
    align-items: center;
    height: 13px;
}
.key-row > label:first-child {
    width: 38px;
}
.year .key-row > label:first-child {
    width: 41px;
}
.key-row .key {
    width: 41px;
    margin-right: 4px;
    background: #ccdaee;
    color: #24406e;
}
.year .key {
    width: 39px;
    text-align: right;
}
.check {
    display: flex;
    align-items: center;
    gap: 2px;
}
.tabs {
    display: flex;
    align-items: flex-end;
    height: 14px;
    padding-left: 2px;
}
.tab {
    height: 10px;
    padding: 0 3px;
    border: 1px solid #93abc9;
    border-left: 0;
    border-bottom: 0;
    background: #adc4e0;
}
.tab.current {
    height: 11px;
    border-left: 1px solid #93abc9;
    background: #e6ecf8;
}
.sheet {
    flex: 1;
    display: flex;
    padding: 1px;
    border: 1px solid #a0b6d0;
    background: #d9e6f5;
}
.sheet-inner {
    flex: 1;
    display: flex;
    padding: 0 3px 0 2px;
    border: 1px solid #a0b6d0;
    background: #e6ecf8;
}
.year .sheet-inner {
    padding-top: 1px;
}
.field {
    display: flex;
    align-items: center;
    height: 15px;
}
.field label {
    flex: none;
    width: 112px;
}
.year .field label {
    width: 140px;
}
.field input {
    width: 42px;
    text-align: right;
}
.year .field input {
    width: 59px;
}
.unit {
    padding-left: 3px;
}
.year .fields:first-child {
    width: 218px;
    white-space: nowrap;
}
.fields.extra {
    flex: 1;
}
.year .extra .field label {
    width: 156px;
}
.year .extra .field input {
    flex: 1;
    text-align: left;
}
.select {
    position: relative;
    flex: none;
    width: 75px;
    height: 12px;
}
.select select {
    appearance: none;
    display: block;
    width: 100%;
}
.select span {
    position: absolute;
    top: 1px;
    right: 1px;
    bottom: 1px;
    width: 8px;
    display: flex;
    align-items: center;
    justify-content: center;
    border-left: 1px solid #a8bbd4;
    background: #d6e4f5;
    pointer-events: none;
}
.actions {
    display: flex;
    gap: 3px;
    margin-top: 8px;
    margin-right: -2px;
}
.year .actions {
    margin-right: 0;
}
.actions button {
    width: 51px;
    height: 13px;
    border: 1px solid #a5bbd6;
    border-radius: 1px;
    background: linear-gradient(#e6f0fb, #cfe1f5);
    color: #1e3a66;
}
.actions .options {
    margin-right: auto;
}
.actions button:disabled {
    background: #cddff1;
    border-color: #bccde2;
    color: #8498b4;
}

/* Status bar */
.statusbar {
    display: flex;
    align-items: center;
    justify-content: flex-end;
    gap: 9px;
    height: 15px;
    padding: 1px 3px 0 0;
    border-top: 1px solid #e2ebf5;
    background: linear-gradient(#c7d7ea, #b9cde3 50%, #cddcec);
    color: #24406e;
}
.statusbar span {
    display: flex;
    align-items: center;
    gap: 3px;
}
.statusbar .icon {
    width: 9px;
    height: 9px;
}
</style>
